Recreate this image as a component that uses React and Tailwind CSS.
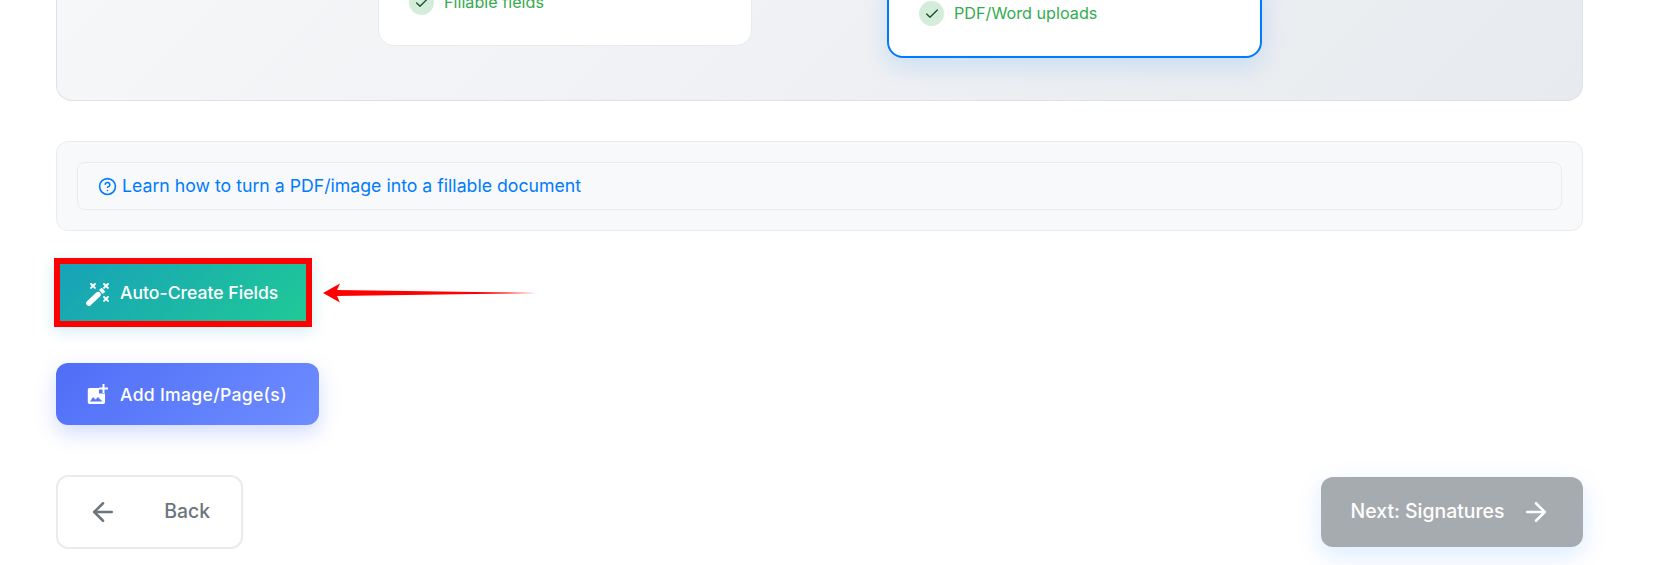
import React from "react";
import { ArrowLeft, ArrowRight, Check, CircleHelp } from "lucide-react";

const font = "font-['Inter','Open_Sans',sans-serif]";

const Feature = ({ text }) => {
  return (
    <div className="flex items-center gap-[10px]">
      <span className="flex items-center justify-center w-[25px] h-[25px] rounded-full bg-[#d4edda] text-[#1e4d2b]">
        <Check size={16} strokeWidth={2} />
      </span>
      <span className="text-[16.2px] font-normal text-[#34ab50]">{text}</span>
    </div>
  );
};

const TopPanel = () => {
  return (
    <div className="h-[101px] flex items-end overflow-hidden rounded-b-2xl border-b border-x border-[#dee2e6] bg-[linear-gradient(135deg,#f6f7f9,#e7eaee)]">
      <div className="w-[321px] shrink-0" />
      <div className="w-[374px] h-[80px] mb-[54px] shrink-0 flex flex-col justify-end pb-[30px] pl-[30px] bg-white rounded-b-2xl border border-[#e9ecef]">
        <Feature text="Fillable fields" />
      </div>
      <div className="w-[135px] shrink-0" />
      <div className="w-[375px] h-[80px] mb-[42px] shrink-0 flex flex-col justify-end pb-[30px] pl-[30px] bg-white rounded-b-2xl border-2 border-[#007bff] shadow-[0_8px_25px_rgba(0,123,255,0.15)]">
        <Feature text="PDF/Word uploads" />
      </div>
    </div>
  );
};

const HelpPanel = () => {
  return (
    <div className="mt-[40px] p-5 h-[90px] rounded-xl border border-[#e9ecef] bg-[#f8f9fa]">
      <div className="h-[48px] flex items-center gap-[5px] pl-[20px] rounded-lg border border-[#e9ecef]">
        <CircleHelp size={19} strokeWidth={2} className="text-[#007bff]" />
        <a className="text-[17.7px] font-normal text-[#007bff]">
          Learn how to turn a PDF/image into a fillable document
        </a>
      </div>
    </div>
  );
};

const WandIcon = () => {
  return (
    <svg width="26" height="26" viewBox="0 0 24 24" fill="none" stroke="white" strokeLinecap="round">
      <path d="M4.500 20.500L13 12.500" strokeWidth="5" />
      <path d="M15.500 10.200L18 8" strokeWidth="5" strokeLinecap="butt" />
      <path d="M6.500 2.800l3.600 3.600M10.100 2.800L6.500 6.400M18.500 2.800l3.600 3.600M22.100 2.800l-3.600 3.600M18.500 14.800l3.600 3.600M22.100 14.800l-3.600 3.600" strokeWidth="1.800" />
    </svg>
  );
};

const ImagePlusIcon = () => {
  return (
    <svg width="24" height="24" viewBox="0 0 24 24" fill="white">
      <path d="M4.500 5H14v5.500h6v8.800c0 1-.8 1.700-1.700 1.700H4.500c-1 0-1.700-.8-1.700-1.700V6.700C2.800 5.800 3.500 5 4.500 5z" />
      <path d="M5 18.500l3-4.500 2.500 2.500 2.500-2.500 4.500 4.500z" fill="#5a78f8" />
      <path d="M17.500 1h2v3.500H23v2h-3.500V10h-2V6.500H14v-2h3.500z" />
    </svg>
  );
};

const AutoCreateRow = () => {
  return (
    <div className="mt-[27px] flex items-center gap-[11px] -ml-[2px]">
      <button className="w-[258px] h-[69px] flex items-center gap-[10px] pl-[24px] pt-[2px] border-[6px] border-[#ff0000] bg-[linear-gradient(135deg,#17a2b8,#20c997)] text-white text-[17.6px] font-medium shadow-[0_4px_15px_rgba(23,162,184,0.2)]">
        <WandIcon />
        Auto-Create Fields
      </button>
      <svg width="214" height="20" viewBox="0 0 214 20">
        <path d="M0 10L17 0.500L14 7L214 10L14 13L17 19.500z" fill="#ff0000" />
      </svg>
    </div>
  );
};

const AddImageButton = () => {
  return (
    <button className="mt-[36px] w-[263px] h-[62px] flex items-center gap-[11px] pl-[29px] pt-[2px] rounded-xl bg-[linear-gradient(135deg,#4f6ef7,#6e8dff)] text-white text-[17.6px] font-medium tracking-[0.3px] shadow-[0_8px_20px_rgba(79,110,247,0.25)]">
      <ImagePlusIcon />
      Add Image/Page(s)
    </button>
  );
};

const Footer = () => {
  return (
    <div className="mt-[50px] flex items-center justify-between">
      <button className="w-[187px] h-[74px] flex items-center justify-between pl-[30px] pr-[31px] rounded-xl border-2 border-[#e9ecef] bg-white text-[#6c757d] text-[19.4px] font-medium">
        <ArrowLeft size={30} strokeWidth={2} />
        Back
      </button>
      <button className="w-[262px] h-[70px] flex items-center justify-center gap-[17px] pr-[2px] rounded-xl bg-[#a6abaf] text-white text-[19.4px] font-medium shadow-[0_8px_25px_rgba(0,123,255,0.15)]">
        Next: Signatures
        <ArrowRight size={30} strokeWidth={2} />
      </button>
    </div>
  );
};

export default function App() {
  return (
    <div className={`${font} w-full h-[565px] overflow-hidden bg-white px-[56px] pr-[72px]`}>
      <TopPanel />
      <HelpPanel />
      <AutoCreateRow />
      <AddImageButton />
      <Footer />
    </div>
  );
}
